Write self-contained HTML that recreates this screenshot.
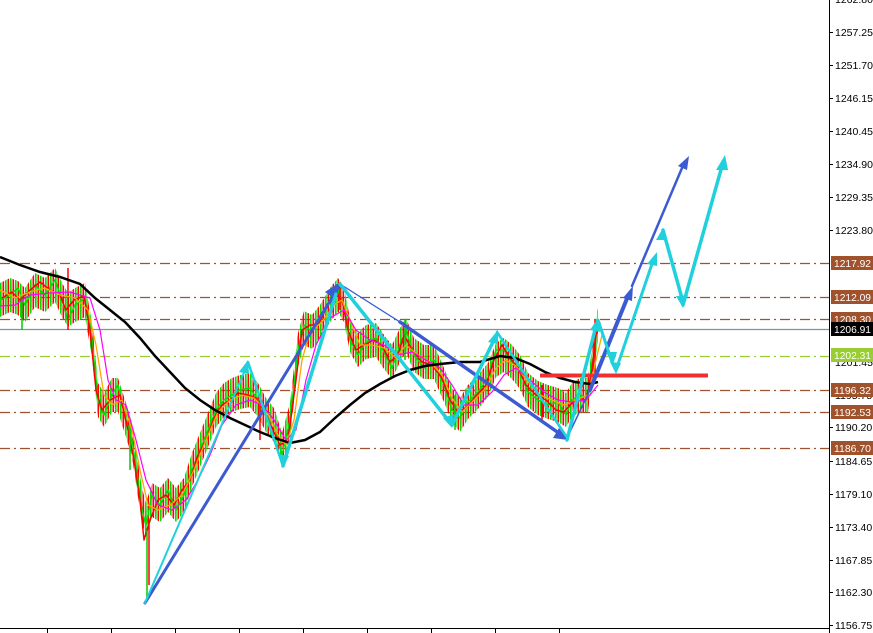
<!DOCTYPE html>
<html><head><meta charset="utf-8"><style>
html,body{margin:0;padding:0;background:#fff;}
svg{display:block;font-family:"Liberation Sans",sans-serif;}
</style></head><body>
<svg width="873" height="633" viewBox="0 0 873 633" xmlns="http://www.w3.org/2000/svg">
<defs>
<pattern id="cs" patternUnits="userSpaceOnUse" width="5" height="8">
<rect x="0" y="0" width="1.6" height="8" fill="#00dd00"/>
<rect x="2.5" y="0" width="1.6" height="8" fill="#ff0000"/>
</pattern>
<polygon id="band" points="0,288 10,283 18,286 25,293 35,278 45,283 55,273 62,288 68,298 75,293 85,288 92,328 98,388 104,398 112,383 118,383 126,408 132,428 138,468 142,493 146,508 152,488 160,493 168,483 176,493 184,483 192,458 200,438 208,418 216,398 224,388 232,383 240,380 250,378 258,388 266,403 274,413 282,438 290,408 298,338 304,316 312,320 320,310 330,293 338,283 344,293 350,323 358,338 366,330 376,328 384,340 392,350 400,333 406,323 414,343 424,350 434,350 444,373 452,393 460,403 468,390 478,380 488,368 496,348 504,343 512,350 520,360 528,378 538,386 548,390 558,393 566,398 572,388 580,383 588,383 594,338 598,313 598,337 594,362 588,407 580,407 572,412 566,422 558,417 548,414 538,410 528,402 520,384 512,374 504,367 496,372 488,392 478,404 468,414 460,427 452,417 444,397 434,374 424,374 414,367 406,347 400,357 392,374 384,364 376,352 366,354 358,362 350,347 344,317 338,307 330,317 320,334 312,344 304,340 298,362 290,432 282,462 274,437 266,427 258,412 250,402 240,404 232,407 224,412 216,422 208,442 200,462 192,482 184,507 176,517 168,507 160,517 152,512 146,532 142,517 138,492 132,452 126,432 118,407 112,407 104,422 98,412 92,352 85,312 75,317 68,322 62,312 55,297 45,307 35,302 25,317 18,310 10,307 0,312"/>
</defs>
<rect width="873" height="633" fill="#fff"/>
<g stroke="#a0522d" stroke-width="1.3" stroke-dasharray="10,4,2,4" fill="none">
<line x1="0" y1="263.5" x2="829" y2="263.5"/>
<line x1="0" y1="297.5" x2="829" y2="297.5"/>
<line x1="0" y1="319.5" x2="829" y2="319.5"/>
<line x1="0" y1="390.5" x2="829" y2="390.5"/>
<line x1="0" y1="412.5" x2="829" y2="412.5"/>
<line x1="0" y1="448.5" x2="829" y2="448.5"/>
</g>
<line x1="0" y1="356.5" x2="829" y2="356.5" stroke="#9acd32" stroke-width="1.3" stroke-dasharray="10,4,2,4"/>
<line x1="0" y1="329.5" x2="829" y2="329.5" stroke="#8090a0" stroke-width="1.3"/>

<use href="#band" fill="url(#cs)" transform="translate(0,-5)"/>
<use href="#band" fill="url(#cs)" transform="translate(0,5)"/>
<use href="#band" fill="url(#cs)"/>
<g fill="none" stroke-linejoin="round">
<polyline stroke="#00e000" stroke-width="1.5" points="0,300 10,295 18,288 25,305 35,285 45,295 55,280 62,300 68,320 75,305 85,298 92,340 98,400 104,415 112,395 118,385 126,420 132,440 138,480 142,510 146,525 152,495 160,505 168,490 176,510 184,495 192,470 200,450 208,430 216,410 224,400 232,395 240,390 250,388 258,400 266,415 274,425 282,455 290,420 298,350 304,325 312,332 320,318 330,300 338,290 344,305 350,340 358,355 366,342 376,338 384,352 392,368 400,345 406,330 414,355 424,368 434,360 444,385 452,410 460,418 468,402 478,392 488,378 496,350 504,350 512,362 520,372 528,392 538,400 548,405 558,402 566,415 572,400 580,395 588,398 594,350 598,322"/>
<polyline stroke="#ff0000" stroke-width="1.5" points="2,298 12,292 20,300 30,290 40,282 50,290 60,295 66,310 74,300 84,296 90,330 96,390 102,410 110,400 120,395 128,430 134,460 140,500 144,540 150,520 158,500 166,495 174,505 182,490 190,480 198,455 206,440 214,418 222,405 230,400 238,393 248,395 256,398 264,410 272,428 280,445 288,440 296,380 302,330 310,325 318,325 328,305 336,295 342,300 348,330 356,350 364,345 374,340 382,345 390,362 398,355 404,335 412,350 422,362 432,365 442,378 450,400 458,412 466,408 476,396 486,385 494,360 502,345 510,358 518,368 526,385 536,395 546,400 556,410 564,412 570,405 578,398 586,400 592,370 596,335 600,322"/>
</g>
<g stroke-width="1.5">
<line x1="68" y1="268" x2="68" y2="330" stroke="#f00"/>
<line x1="22" y1="300" x2="22" y2="330" stroke="#0c0"/>
<line x1="147" y1="530" x2="147" y2="600" stroke="#0c0"/>
<line x1="149" y1="520" x2="149" y2="585" stroke="#f00"/>
<line x1="130" y1="420" x2="130" y2="470" stroke="#0c0"/>
<line x1="260" y1="400" x2="260" y2="440" stroke="#f00"/>
<line x1="340" y1="282" x2="340" y2="310" stroke="#f00"/>
<line x1="405" y1="320" x2="405" y2="360" stroke="#0c0"/>
<line x1="455" y1="395" x2="455" y2="430" stroke="#0c0"/>
<line x1="542" y1="385" x2="542" y2="420" stroke="#f00"/>
<line x1="595" y1="320" x2="595" y2="380" stroke="#f00"/>
</g>
<polyline fill="none" stroke="#ffa500" stroke-width="1.3" points="0,290 15,298 30,292 45,288 60,295 75,298 88,310 96,345 104,395 112,405 122,400 132,430 140,470 148,505 158,510 170,505 182,495 194,470 206,440 218,412 230,400 242,395 254,398 266,410 278,435 286,445 294,420 302,360 310,332 322,322 334,305 342,300 350,320 360,345 372,345 384,348 396,358 406,345 418,355 430,362 442,375 452,398 462,412 474,400 486,388 496,368 506,360 516,366 528,382 540,395 552,400 564,405 576,400 588,395 596,360 602,335"/>
<polyline fill="none" stroke="#ff00ff" stroke-width="1.2" points="0,306 15,305 30,295 50,293 70,292 90,298 100,330 108,380 116,400 126,405 136,440 146,480 158,505 172,510 186,500 198,480 210,455 222,425 236,405 250,400 262,405 274,420 286,440 296,430 306,380 316,345 330,318 344,310 356,330 370,340 384,345 398,355 412,352 426,360 440,368 452,385 464,405 478,405 492,392 504,375 516,368 530,380 544,392 558,400 572,402 586,400 598,385"/>
<polyline fill="none" stroke="#000" stroke-width="2.5" points="0,257 20,265 40,272 60,277 80,284 95,298 110,310 125,322 140,338 155,356 170,372 185,388 200,400 215,410 230,418 245,425 260,432 275,438 290,443 305,440 320,432 335,418 350,405 365,393 380,384 395,376 410,370 425,366 440,364 460,362 480,362 500,356 515,358 530,364 545,372 560,378 575,382 590,384 598,382"/>
<line x1="540" y1="375.5" x2="708" y2="375.5" stroke="#f03030" stroke-width="4"/>
<g stroke="#3c5ad2" fill="none" stroke-linecap="round">
<line x1="145" y1="603" x2="338" y2="288" stroke-width="3"/>
<line x1="340" y1="284" x2="400" y2="322" stroke-width="1.3"/>
<line x1="400" y1="322" x2="563" y2="436" stroke-width="3.5"/>
<line x1="567" y1="438" x2="590" y2="390" stroke-width="1.5"/>
<line x1="590" y1="390" x2="628" y2="296" stroke-width="4"/>
<line x1="632" y1="286" x2="682" y2="168" stroke-width="2.5"/>
</g>
<g fill="#3c5ad2">
<polygon points="340,282 325,292 336,300"/>
<polygon points="568,440 553,438 559,428"/>
<polygon points="633,286 623,298 632,301"/>
<polygon points="689,156 678,166 687,170"/>
</g>
<g stroke="#20d0dc" fill="none" stroke-linecap="round">
<line x1="145" y1="603" x2="246" y2="368" stroke-width="2"/>
<line x1="248" y1="362" x2="283" y2="466" stroke-width="2.5"/>
<line x1="283" y1="466" x2="336" y2="294" stroke-width="3.5"/>
<line x1="340" y1="284" x2="452" y2="425" stroke-width="3.5"/>
<line x1="452" y1="425" x2="495" y2="338" stroke-width="3.5"/>
<line x1="497" y1="332" x2="566" y2="436" stroke-width="2.5"/>
<line x1="567" y1="440" x2="596" y2="326" stroke-width="3.5"/>
<line x1="598" y1="320" x2="612" y2="362" stroke-width="3"/>
<line x1="616" y1="370" x2="654" y2="258" stroke-width="3"/>
<line x1="663" y1="230" x2="683" y2="302" stroke-width="3.5"/>
<line x1="683" y1="305" x2="722" y2="166" stroke-width="3.5"/>
</g>
<g fill="#20d0dc">
<polygon points="248,360 239,372 249,374"/>
<polygon points="283,468 279,454 289,456"/>
<polygon points="452,428 443,418 454,414"/>
<polygon points="498,330 488,342 498,344"/>
<polygon points="598,318 590,330 600,332"/>
<polygon points="613,365 606,352 617,352"/>
<polygon points="616,374 610,362 621,363"/>
<polygon points="657,252 647,264 657,266"/>
<polygon points="663,228 656,240 667,240"/>
<polygon points="683,308 676,296 688,295"/>
<polygon points="725,155 716,170 728,170"/>
</g>
<line x1="829.5" y1="0" x2="829.5" y2="633" stroke="#000" stroke-width="1"/>
<line x1="0" y1="628.5" x2="829" y2="628.5" stroke="#000" stroke-width="1"/>
<g stroke="#000">
<line x1="47.5" y1="628" x2="47.5" y2="633"/><line x1="111.5" y1="628" x2="111.5" y2="633"/>
<line x1="175.5" y1="628" x2="175.5" y2="633"/><line x1="239.5" y1="628" x2="239.5" y2="633"/>
<line x1="303.5" y1="628" x2="303.5" y2="633"/><line x1="367.5" y1="628" x2="367.5" y2="633"/>
<line x1="431.5" y1="628" x2="431.5" y2="633"/><line x1="495.5" y1="628" x2="495.5" y2="633"/>
<line x1="559.5" y1="628" x2="559.5" y2="633"/>
</g>
<g font-size="10.5" fill="#000">
<text x="835" y="3">1262.80</text>
<text x="835" y="36">1257.25</text>
<text x="835" y="69">1251.70</text>
<text x="835" y="102">1246.15</text>
<text x="835" y="135">1240.45</text>
<text x="835" y="168">1234.90</text>
<text x="835" y="201">1229.35</text>
<text x="835" y="234">1223.80</text>
<text x="835" y="366">1201.45</text>
<text x="835" y="399">1195.75</text>
<text x="835" y="431">1190.20</text>
<text x="835" y="465">1184.65</text>
<text x="835" y="498">1179.10</text>
<text x="835" y="531">1173.40</text>
<text x="835" y="564">1167.85</text>
<text x="835" y="596">1162.30</text>
<text x="835" y="629">1156.75</text>
</g>
<g stroke="#000">
<line x1="829" y1="32.5" x2="833" y2="32.5"/><line x1="829" y1="65.5" x2="833" y2="65.5"/>
<line x1="829" y1="98.5" x2="833" y2="98.5"/><line x1="829" y1="131.5" x2="833" y2="131.5"/>
<line x1="829" y1="164.5" x2="833" y2="164.5"/><line x1="829" y1="197.5" x2="833" y2="197.5"/>
<line x1="829" y1="230.5" x2="833" y2="230.5"/><line x1="829" y1="427.5" x2="833" y2="427.5"/>
<line x1="829" y1="461.5" x2="833" y2="461.5"/><line x1="829" y1="494.5" x2="833" y2="494.5"/>
<line x1="829" y1="527.5" x2="833" y2="527.5"/><line x1="829" y1="560.5" x2="833" y2="560.5"/>
<line x1="829" y1="592.5" x2="833" y2="592.5"/><line x1="829" y1="625.5" x2="833" y2="625.5"/>
</g>
<g font-size="10.5" fill="#fff">
<rect x="831" y="256" width="42" height="14" fill="#a0522d"/><text x="834" y="267" textLength="37" lengthAdjust="spacingAndGlyphs">1217.92</text>
<rect x="831" y="290" width="42" height="14" fill="#a0522d"/><text x="834" y="301" textLength="37" lengthAdjust="spacingAndGlyphs">1212.09</text>
<rect x="831" y="312" width="42" height="14" fill="#a0522d"/><text x="834" y="323" textLength="37" lengthAdjust="spacingAndGlyphs">1208.30</text>
<rect x="831" y="322" width="42" height="14" fill="#000"/><text x="834" y="333" textLength="37" lengthAdjust="spacingAndGlyphs">1206.91</text>
<rect x="831" y="348" width="42" height="14" fill="#9acd32"/><text x="834" y="359" textLength="37" lengthAdjust="spacingAndGlyphs">1202.31</text>
<rect x="831" y="383" width="42" height="14" fill="#a0522d"/><text x="834" y="394" textLength="37" lengthAdjust="spacingAndGlyphs">1196.32</text>
<rect x="831" y="405" width="42" height="14" fill="#a0522d"/><text x="834" y="416" textLength="37" lengthAdjust="spacingAndGlyphs">1192.53</text>
<rect x="831" y="441" width="42" height="14" fill="#a0522d"/><text x="834" y="452" textLength="37" lengthAdjust="spacingAndGlyphs">1186.70</text>
</g>
</svg>
</body></html>
